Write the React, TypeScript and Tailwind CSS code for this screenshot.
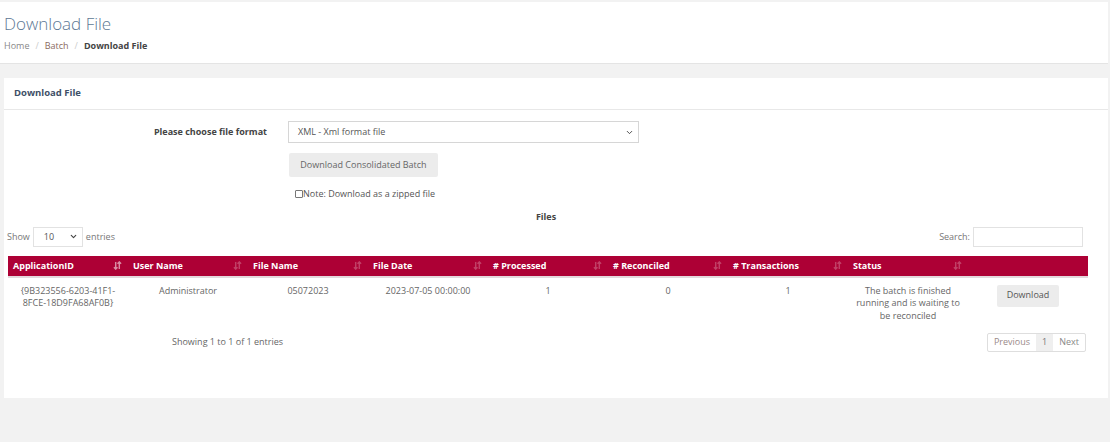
import { ChevronDown } from 'lucide-react'

const cols = ['ApplicationID', 'User Name', 'File Name', 'File Date', '# Processed', '# Reconciled', '# Transactions', 'Status']

function SortIcon({ active }: { active?: boolean }) {
  return (
    <svg width="9" height="9" viewBox="0 0 10 10" aria-hidden="true">
      <g fill="none" stroke="#ffffff" strokeWidth="1.6">
        <path d="M3 1v8M1 7l2 2 2-2" opacity={active ? 0.55 : 0.25} />
        <path d="M7 9V1M5 3l2-2 2 2" opacity={active ? 0.55 : 0.25} />
      </g>
    </svg>
  )
}

export default function App() {
  return (
    <div className="h-[442px] w-[1110px] overflow-hidden bg-[#f2f2f2] pr-[2px] pt-[2px] font-['Open_Sans',sans-serif] text-[9px] text-[#555]">
      <div className="h-[62px] border-b border-[#e4e4e4] bg-white px-[4px] pt-[11px]">
        <h1 className="text-[17px] font-light leading-[22px] text-[#5d7894]">Download File</h1>
        <div className="mt-[5px] flex items-center gap-[6px] text-[9px] leading-[12px]">
          <span className="text-[#888]">Home</span>
          <span className="text-[#ccc]">/</span>
          <span className="text-[#8a6a5e]">Batch</span>
          <span className="text-[#ccc]">/</span>
          <span className="font-bold text-[#444]">Download File</span>
        </div>
      </div>

      <div className="ml-[4px] mt-[14px] h-[320px] bg-white">
        <div className="flex h-[32px] items-center border-b border-[#e8e8e8] px-[10px] text-[9.5px] font-bold text-[#3e5068]">
          Download File
        </div>

        <div className="flex items-center pt-[11px]">
          <div className="w-[263px] text-right text-[9px] font-bold text-[#444]">Please choose file format</div>
          <div className="ml-[21px] flex h-[22px] w-[351px] items-center justify-between border border-[#d6d6d6] pl-[9px] pr-[4px] text-[#555]">
            <span>XML - Xml format file</span>
            <ChevronDown size={9} strokeWidth={2.5} className="text-[#444]" />
          </div>
        </div>

        <div className="ml-[285px] mt-[10px] flex h-[24px] w-[149px] items-center justify-center rounded-[2px] bg-[#ececec] text-[#666]">
          Download Consolidated Batch
        </div>

        <div className="ml-[291px] mt-[11px] flex items-center leading-[12px] text-[#555]">
          <span className="inline-block h-[8px] w-[8px] rounded-[1px] border border-[#777]" />
          <span>Note: Download as a zipped file</span>
        </div>

        <div className="mt-[10px] pr-[20px] text-center text-[9px] font-bold text-[#444]">Files</div>

        <div className="mt-[3px] flex items-center justify-between pl-[3px] pr-[25px]">
          <div className="flex items-center gap-[3px] text-[#777]">
            <span>Show</span>
            <div className="flex h-[20px] w-[50px] items-center justify-between border border-[#e2e2e2] pl-[10px] pr-[4px]">
              <span className="text-[#555]">10</span>
              <ChevronDown size={9} strokeWidth={3} className="text-[#444]" />
            </div>
            <span>entries</span>
          </div>
          <div className="flex items-center gap-[3px] text-[#777]">
            <span>Search:</span>
            <div className="h-[20px] w-[110px] border border-[#e2e2e2]" />
          </div>
        </div>

        <div className="ml-[4px] mt-[9px] w-[1080px]">
          <div className="grid h-[22px] grid-cols-[repeat(9,120px)] items-center border-b-2 border-[#e3d8dc] bg-[#ad0035] text-[9px] font-bold text-white">
            {cols.map((c, i) => (
              <div key={c} className="flex items-center justify-between pl-[5px] pr-[6px]">
                <span>{c}</span>
                <SortIcon active={i === 0} />
              </div>
            ))}
            <div />
          </div>
          <div className="grid h-[47px] grid-cols-[repeat(9,120px)] items-start pt-[7px] text-center leading-[12.5px] text-[#666]">
            <div>{'{9B323556-6203-41F1-'}<br />{'8FCE-18D9FA68AF0B}'}</div>
            <div>Administrator</div>
            <div>05072023</div>
            <div>2023-07-05 00:00:00</div>
            <div>1</div>
            <div>0</div>
            <div>1</div>
            <div className="px-[4px]">The batch is finished running and is waiting to be reconciled</div>
            <div className="flex justify-center">
              <div className="flex h-[22px] w-[62px] items-center justify-center rounded-[2px] bg-[#ececec] text-[#555]">Download</div>
            </div>
          </div>
        </div>

        <div className="mt-[8px] flex items-center justify-between pl-[168px] pr-[22px]">
          <span className="text-[#666]">Showing 1 to 1 of 1 entries</span>
          <div className="flex h-[19px] items-stretch rounded-[2px] border border-[#dedede] text-[#888]">
            <span className="flex items-center px-[6px] text-[#9a8a8a]">Previous</span>
            <span className="flex items-center bg-[#efefef] px-[6px] text-[#777]">1</span>
            <span className="flex items-center px-[6px]">Next</span>
          </div>
        </div>
      </div>
    </div>
  )
}
